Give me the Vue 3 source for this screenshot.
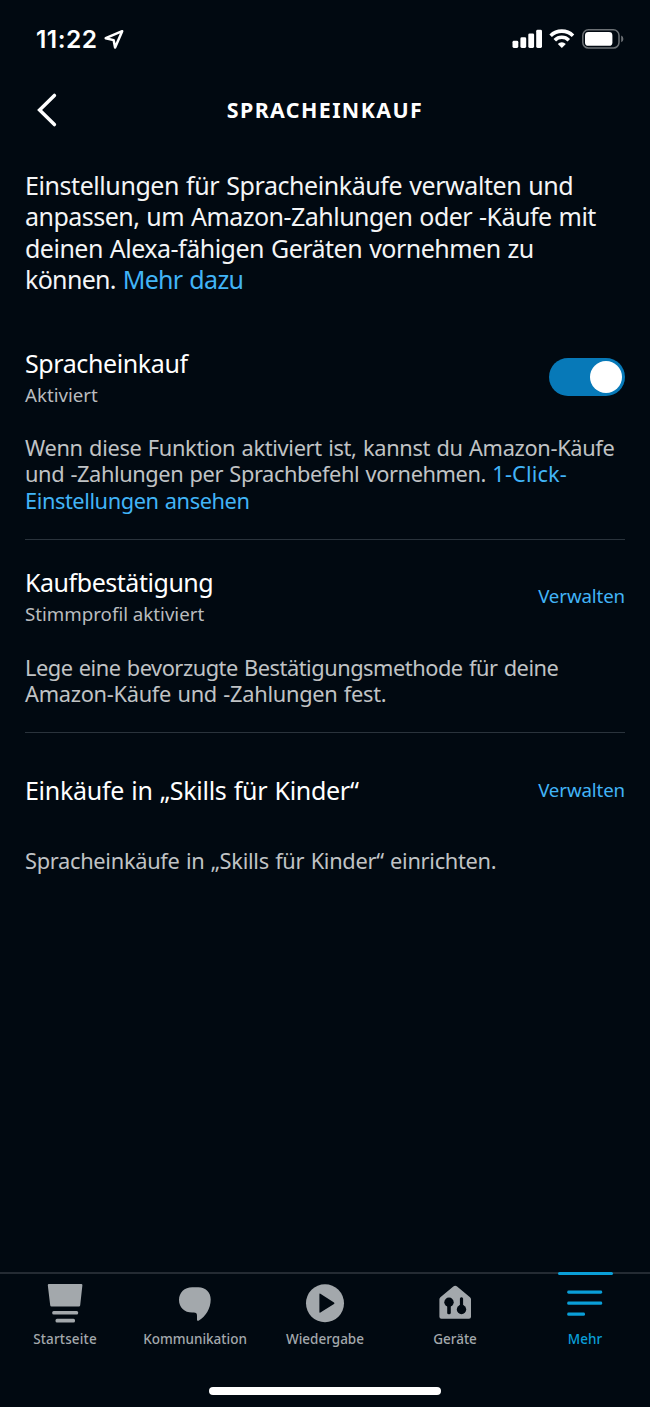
<script setup>
const intro = [
  { text: 'Einstellungen für Spracheinkäufe verwalten und', cls: 'i1' },
  { text: 'anpassen, um Amazon-Zahlungen oder -Käufe mit', cls: 'i2' },
  { text: 'deinen Alexa-fähigen Geräten vornehmen zu', cls: 'i3' },
  { text: 'können. ', link: 'Mehr dazu', cls: 'i4' },
]
const sections = [
  {
    title: 'Spracheinkauf',
    cls: 't1',
    sub: 'Aktiviert',
    subCls: 's1',
    toggle: true,
    lines: [
      { text: 'Wenn diese Funktion aktiviert ist, kannst du Amazon-Käufe', cls: 'b1' },
      { text: 'und -Zahlungen per Sprachbefehl vornehmen. ', link: '1-Click-', cls: 'b2' },
      { text: '', link: 'Einstellungen ansehen', cls: 'b3' },
    ],
  },
  {
    title: 'Kaufbestätigung',
    cls: 't2',
    sub: 'Stimmprofil aktiviert',
    subCls: 's2',
    lines: [
      { text: 'Lege eine bevorzugte Bestätigungsmethode für deine', cls: 'b4' },
      { text: 'Amazon-Käufe und -Zahlungen fest.', cls: 'b5' },
    ],
  },
  {
    title: 'Einkäufe in „Skills für Kinder“',
    cls: 't3',
    lines: [{ text: 'Spracheinkäufe in „Skills für Kinder“ einrichten.', cls: 'b6' }],
  },
]
</script>

<template>
  <div class="screen">
    <header class="status">
      <span class="time">11:22</span>
      <svg class="loc" width="22" height="22" viewBox="0 0 22 22"><path d="M18.200 3.200 1.700 10.200l7.900 1.900 1.500 7.500z" fill="none" stroke="#fff" stroke-width="2.500" stroke-linejoin="round" /></svg>
      <svg class="sys" width="114" height="24" viewBox="0 0 114 24">
        <g fill="#fff">
          <rect x="0.5" y="13.800" width="5.800" height="7.200" rx="1.400" />
          <rect x="8.400" y="10.300" width="5.800" height="10.700" rx="1.400" />
          <rect x="16.300" y="6.400" width="5.800" height="14.600" rx="1.400" />
          <rect x="24.200" y="2.800" width="5.800" height="18.200" rx="1.400" />
          <path d="M49.800 21 45.800 17a5.700 5.700 0 0 1 8 0z" />
        </g>
        <g fill="none" stroke="#fff" stroke-width="3.600">
          <path d="M38.600 8.700a16 16 0 0 1 22.400 0" />
          <path d="M42.800 13.200a9.900 9.900 0 0 1 14 0" />
        </g>
        <rect x="70.800" y="2.800" width="36.200" height="18.200" rx="5.600" fill="none" stroke="#6c7175" stroke-width="1.500" />
        <rect x="73" y="5" width="27.400" height="13.800" rx="3.400" fill="#fff" />
        <path d="M109.200 8.600q2.200 1 2.200 3.300t-2.200 3.300z" fill="#6c7175" />
      </svg>
    </header>

    <div class="bar">
      <svg class="back" width="22" height="36" viewBox="0 0 22 36"><path d="M18.400 3.400 3.600 18 18.400 32.600" fill="none" stroke="#fff" stroke-width="3.500" stroke-linecap="round" stroke-linejoin="miter" /></svg>
      <h1>SPRACHEINKAUF</h1>
    </div>

    <main>
      <p class="intro">
        <span v-for="l in intro" :key="l.cls" class="line" :class="l.cls">{{ l.text }}<a v-if="l.link">{{ l.link }}</a></span>
      </p>
      <section v-for="s in sections" :key="s.title">
        <div class="head">
          <div>
            <h2><span :class="s.cls">{{ s.title }}</span></h2>
            <div v-if="s.sub" class="sub"><span :class="s.subCls">{{ s.sub }}</span></div>
          </div>
          <div v-if="s.toggle" class="toggle"><i></i></div>
          <a v-else class="manage">Verwalten</a>
        </div>
        <p class="body">
          <span v-for="l in s.lines" :key="l.cls" class="line" :class="l.cls">{{ l.text }}<a v-if="l.link">{{ l.link }}</a></span>
        </p>
      </section>
    </main>

    <nav>
      <div class="tab">
        <svg width="40" height="44" viewBox="0 0 40 44" fill="#a3a8ac"><path d="M3.900 4h32.400q1.200 0 1.100 1.200l-2.200 20q-.1 1.200-1.300 1.200H6.500q-1.200 0-1.300-1.200L2.800 5.200q-.1-1.200 1.100-1.200z" /><rect x="7.200" y="31" width="26" height="3.600" rx="1.500" /><rect x="10.500" y="38.800" width="19.500" height="3.600" rx="1.500" /></svg>
        <span class="n1">Startseite</span>
      </div>
      <div class="tab">
        <svg width="40" height="44" viewBox="0 0 40 44" fill="#a3a8ac"><path d="M17.200 7.200h6.200c7.200 0 12.300 5.100 12.300 12.300 0 8.800-5 17.300-12.200 21.200-.8.400-1.500 0-1.500-.9v-4.100c0-2.300-.8-3.200-3.200-3.200h-1.600C9.500 32.500 4 27.200 4 19.900S9.500 7.200 17.200 7.200z" /></svg>
        <span class="n2">Kommunikation</span>
      </div>
      <div class="tab">
        <svg width="40" height="44" viewBox="0 0 40 44"><circle cx="20" cy="23.200" r="19" fill="#a3a8ac" /><path d="M14.400 14.400v17.600q0 1.200 1 .6l13.600-8.700q1-.7 0-1.400L15.400 13.800q-1-.6-1 .6z" fill="#010911" /></svg>
        <span class="n3">Wiedergabe</span>
      </div>
      <div class="tab">
        <svg width="40" height="44" viewBox="0 0 40 44"><path d="M18.300 6.600q1.900-1.500 3.800 0L35 17.200q1 .8 1 2v17.600q0 2-2 2H6.400q-2 0-2-2V19.200q0-1.200 1-2z" fill="#a3a8ac" /><g fill="#010911"><circle cx="14" cy="22.200" r="4.700" /><rect x="12.200" y="22" width="3.600" height="12.300" rx="1.600" /><circle cx="26.500" cy="29.500" r="4.700" /><rect x="24.900" y="17.200" width="3.200" height="11" rx="1.500" /></g></svg>
        <span class="n4">Geräte</span>
      </div>
      <div class="tab active">
        <svg width="40" height="44" viewBox="0 0 40 44" fill="#0a9fd8"><rect x="2.200" y="10.500" width="35" height="3.200" rx="1.400" /><rect x="2.200" y="21.600" width="35" height="3.200" rx="1.400" /><rect x="2.200" y="32.600" width="17.800" height="3.200" rx="1.400" /></svg>
        <span class="n5">Mehr</span>
      </div>
    </nav>
    <div class="home"></div>
  </div>
</template>

<style>
body { background: #010911; }
</style>

<style scoped>
.screen { width: 650px; height: 1407px; overflow: hidden; display: flex; flex-direction: column; align-items: stretch; background: #010911; color: #f4f5f6; font-family: "Noto Sans", "Open Sans", sans-serif; }
h1, h2, p { margin: 0; font-weight: 400; }
.status { height: 78px; flex: none; display: flex; align-items: center; padding: 0 24px 0 36px; color: #fff; }
.time { font: 600 24.5px/30px Inter, sans-serif; letter-spacing: 0.5px; width: 68px; white-space: nowrap; }
.sys { margin-left: auto; }
.bar { height: 64px; flex: none; display: grid; grid-template-columns: 60px 1fr 60px; align-items: center; padding: 0 36px; }
.bar h1 { font-size: 21.4px; line-height: 30px; font-weight: 700; letter-spacing: 1.4px; text-align: center; color: #fff; white-space: nowrap; }
main { flex: 1; padding: 28px 25px 0; }
.line { display: block; white-space: pre; }
a { color: #41b4f7; }
.intro { font-size: 25px; line-height: 31.4px; margin-bottom: 50.9px; }
section { padding-bottom: 24.4px; }
section + section { border-top: 1px solid #2a333c; padding-top: 25.8px; }
.head { height: 61px; margin-bottom: 27px; display: flex; align-items: center; justify-content: space-between; }
section + section .head { margin-bottom: 27.7px; }
h2 { font-size: 25px; line-height: 32px; color: #fff; white-space: nowrap; }
.sub { margin-top: 3px; font-size: 18.7px; line-height: 26px; color: #b9bcbf; white-space: nowrap; }
.manage { font-size: 18.7px; line-height: 26px; letter-spacing: -0.12px; white-space: nowrap; }
.toggle { width: 76px; height: 38px; border-radius: 19px; background: #0779b8; display: flex; align-items: center; justify-content: flex-end; padding-right: 3px; box-sizing: border-box; }
.toggle i { width: 32px; height: 32px; border-radius: 50%; background: #fff; }
.body { font-size: 21.8px; line-height: 26.7px; color: #c0c3c5; }
.i1 { letter-spacing: -0.43px; word-spacing: 1px; }
.i2 { letter-spacing: -0.53px; word-spacing: 1px; }
.i3 { letter-spacing: -0.51px; word-spacing: 1px; }
.i4 { letter-spacing: -0.68px; word-spacing: 1px; }
.t1 { letter-spacing: -0.4px; }
.t2 { letter-spacing: -0.46px; }
.t3 { letter-spacing: -0.29px; word-spacing: 1px; }
.b1 { letter-spacing: -0.33px; word-spacing: 1px; }
.b2 { letter-spacing: -0.4px; word-spacing: 1px; }
.b2 a { letter-spacing: 0.13px; }
.b3 { letter-spacing: -0.43px; word-spacing: 1px; }
.b4 { letter-spacing: -0.47px; word-spacing: 1px; }
.b5 { letter-spacing: -0.28px; word-spacing: 1px; }
.b6 { letter-spacing: -0.29px; word-spacing: 1px; }
.n1 { letter-spacing: 0.15px; }
nav { flex: none; height: 92.5px; display: grid; grid-template-columns: repeat(5, 1fr); border-top: 2px solid #242b33; box-sizing: border-box; }
.tab { display: flex; flex-direction: column; align-items: center; padding-top: 6px; font-size: 13.5px; line-height: 20px; font-weight: 500; color: #a3a8ac; position: relative; }
.tab svg { margin-bottom: 5px; }
.tab span { white-space: nowrap; }
.active { color: #0a9fd8; }
.active::before { content: ""; position: absolute; top: -2px; width: 55px; height: 3px; border-radius: 2px; background: #0a9fd8; }
.home { flex: none; width: 232px; height: 8px; border-radius: 4px; background: #fff; margin: 22px auto 12.5px; }
</style>
